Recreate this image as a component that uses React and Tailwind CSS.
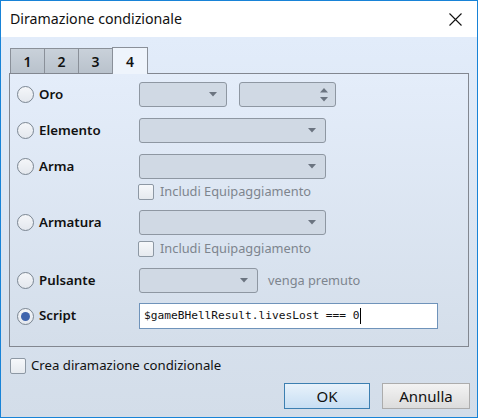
import React from "react";

const font = { fontFamily: '"Noto Sans", "Open Sans", sans-serif' };

const Arrow = () => (
  <svg width="8" height="5" viewBox="0 0 8 5" className="shrink-0">
    <path d="M0 0h8L4 4.5z" fill="#6b7480" />
  </svg>
);

const Combo = ({ w }) => (
  <div
    className={`h-[25px] ${w} rounded-[3px] border border-[#8e97a2] bg-[#d0d9e4] flex items-center justify-end pr-[9px]`}
  >
    <Arrow />
  </div>
);

const Radio = ({ on }) => (
  <div className="w-[17px] h-[17px] rounded-full border border-[#7b8692] bg-gradient-to-b from-[#f4f6f9] to-[#e4e8ee] flex items-center justify-center shrink-0">
    {on && <div className="w-[9px] h-[9px] rounded-full bg-[#3e64ad]" />}
  </div>
);

const Check = () => (
  <div className="w-[16px] h-[16px] rounded-[2px] border border-[#8d98a4] bg-gradient-to-b from-[#f6f8fb] to-[#e6eaef] shrink-0" />
);

const Row = ({ label, on, className = "", children }) => (
  <div className={`flex items-center h-[25px] ${className}`}>
    <div className="w-[129px] flex items-center pl-[7px] gap-[5px]">
      <Radio on={on} />
      <span className="text-[13.3px] font-semibold text-[#111]">{label}</span>
    </div>
    {children}
  </div>
);

const SubCheck = ({ className = "" }) => (
  <div className={`flex items-center h-[16px] pl-[128px] gap-[6px] ${className}`}>
    <Check />
    <span className="text-[12.8px] text-[#7d858e]">Includi Equipaggiamento</span>
  </div>
);

export default function App() {
  return (
    <div
      style={font}
      className="w-[478px] h-[418px] border border-[#1883d7] flex flex-col bg-white overflow-hidden"
    >
      <div className="h-[36px] shrink-0 bg-white flex items-center justify-between pl-[9px] pr-[15px]">
        <span className="text-[14.2px] text-[#111]">Diramazione condizionale</span>
        <svg width="13" height="13" viewBox="0 0 13 13">
          <path d="M0.5 0.5l12 12M12.5 0.5l-12 12" stroke="#111" strokeWidth="1.1" />
        </svg>
      </div>

      <div className="flex-1 bg-gradient-to-b from-[#e2ecfa] to-[#d3dde9] px-[8px] pt-[10px] flex flex-col">
        <div className="flex items-end ml-px h-[26px] relative z-10">
          {["1", "2", "3"].map((t) => (
            <div
              key={t}
              className="w-[35px] h-[25px] -mr-px border border-b-0 border-[#8a9099] bg-gradient-to-b from-[#c9d1da] to-[#b9c2cc] flex items-center justify-center text-[14px] font-semibold text-[#111]"
            >
              {t}
            </div>
          ))}
          <div className="w-[36px] h-[27px] -mb-px border border-b-0 border-[#8a9099] bg-[#eef4fc] flex items-center justify-center text-[14px] font-semibold text-[#111]">
            4
          </div>
        </div>

        <div className="h-[274px] border border-[#828790] bg-gradient-to-b from-[#e4edfa] to-[#d4deea] flex flex-col">
          <Row label="Oro" className="mt-[8px]">
            <Combo w="w-[88px]" />
            <div className="ml-[12px] h-[25px] w-[97px] rounded-[3px] border border-[#8e97a2] bg-[#d0d9e4] flex flex-col items-end justify-center gap-[4px] pr-[7px]">
              <svg width="8" height="5" viewBox="0 0 8 5">
                <path d="M0 4.5h8L4 0z" fill="#6b7480" />
              </svg>
              <Arrow />
            </div>
          </Row>
          <Row label="Elemento" className="mt-[11px]">
            <Combo w="w-[187px]" />
          </Row>
          <Row label="Arma" className="mt-[11px]">
            <Combo w="w-[187px]" />
          </Row>
          <SubCheck className="mt-[5px]" />
          <Row label="Armatura" className="mt-[10px]">
            <Combo w="w-[187px]" />
          </Row>
          <SubCheck className="mt-[6px]" />
          <Row label="Pulsante" className="mt-[11px]">
            <Combo w="w-[119px]" />
            <span className="ml-[10px] text-[12.8px] text-[#7d858e]">venga premuto</span>
          </Row>
          <Row label="Script" on className="mt-[10px] h-[26px]">
            <div className="h-[26px] w-[299px] border border-[#6f93ba] bg-white flex items-center pl-[4px]">
              <span
                className="text-[11.2px] text-[#111] whitespace-pre"
                style={{ fontFamily: '"DejaVu Sans Mono", monospace' }}
              >
                $gameBHellResult.livesLost === 0
              </span>
              <div className="w-px h-[16px] bg-black" />
            </div>
          </Row>
        </div>

        <div className="flex items-center gap-[5px] mt-[11px] h-[16px] ml-px">
          <Check />
          <span className="text-[13.2px] text-[#111]">Crea diramazione condizionale</span>
        </div>

        <div className="flex justify-end gap-[12px] mt-[9px] mr-[-1px]">
          <button className="w-[86px] h-[26px] border border-[#3c7fb1] bg-gradient-to-b from-[#e8f2fb] to-[#c7def3] text-[15px] text-[#111]">
            OK
          </button>
          <button className="w-[88px] h-[26px] border border-[#acacac] bg-gradient-to-b from-[#f3f3f3] to-[#dcdcdc] text-[15px] text-[#111]">
            Annulla
          </button>
        </div>
      </div>
    </div>
  );
}
